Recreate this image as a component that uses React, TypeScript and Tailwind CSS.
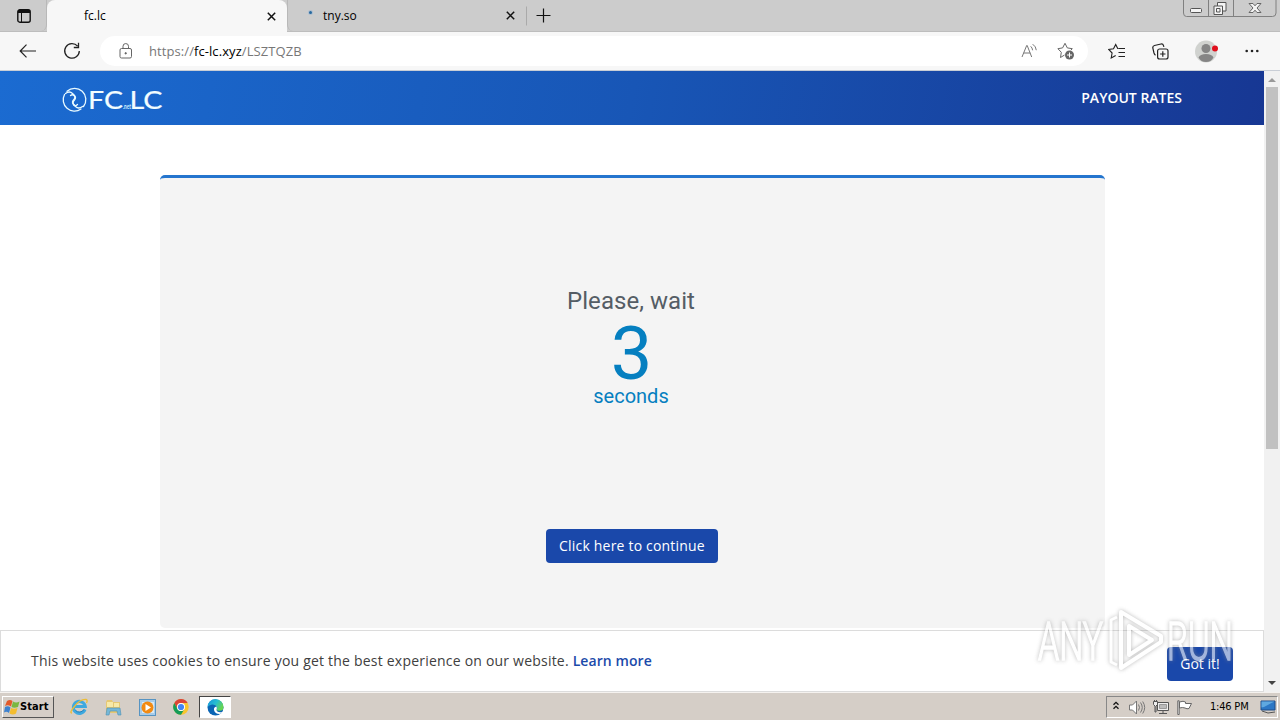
import { useState } from "react";

const uiFont = "font-['Open_Sans',sans-serif]";

function CloseIcon({ className }: { className?: string }) {
  return (
    <svg width="9" height="9" viewBox="0 0 9 9" className={className}>
      <path d="M.8.8l7.400 7.400M8.200.8L.8 8.200" stroke="#111" strokeWidth="1.500" />
    </svg>
  );
}

function WindowButtons() {
  return (
    <svg width="94" height="18" viewBox="0 0 94 18" fill="none" stroke="#808080" className="ml-auto mr-[3px] shrink-0">
      <path d="M.5 0v13q0 3.500 3 3.500h86q3.500 0 3.500-3.500V0M25.500 0v16M50.500 0v16" />
      <rect x="7.500" y="8.500" width="11" height="4" rx="1" fill="#f4f4f4" stroke="#555" />
      <path d="M34.500 2.500h8.500v8.500h-3.500v3.500h-8.500V6h3.500z" fill="#f4f4f4" stroke="#555" />
      <path d="M34.500 6h5v5M33.500 8.500h3.500v3.500h-3.500z" stroke="#555" />
      <path d="M66 3.500h4l2 2.300 2-2.300h4l-4 4.500 4 4.500h-4l-2-2.300-2 2.300h-4L70 8z" fill="#f4f4f4" stroke="#666" />
    </svg>
  );
}

function TabBar() {
  return (
    <div className="flex h-8 bg-[#cccccc] border-b border-[#bdbdbd]">
      <div className="w-[47px] h-[31px] shrink-0 rounded-br-md border-r border-[#b8b8b8] flex items-start pl-[17px] pt-[9px]">
        <svg width="14" height="14" viewBox="0 0 14 14" fill="none" stroke="#111">
          <rect x=".8" y=".8" width="12.400" height="12.400" rx="2" strokeWidth="1.400" />
          <path d="M1 2.500h12" strokeWidth="3" />
          <path d="M4.500 4v9" />
        </svg>
      </div>
      <div className="w-[240px] h-8 shrink-0 flex items-center rounded-t-lg bg-[#f7f7f7] pl-[37px] pr-[11px]">
        <span className="text-xs leading-4 text-black">fc.lc</span>
        <CloseIcon className="ml-auto" />
      </div>
      <div className="w-[239px] h-[31px] shrink-0 flex items-center rounded-bl-md border-l border-[#b8b8b8] pl-[21px] pr-[11px]">
        <span className="size-[3px] rounded-full bg-[#27699e] ring-1 ring-[#aebfd0] -mt-[7px]" />
        <span className="text-xs leading-4 text-black ml-[11px]">tny.so</span>
        <CloseIcon className="ml-auto" />
      </div>
      <svg width="28" height="31" viewBox="0 0 28 31" stroke="#111" className="shrink-0">
        <path d="M-.5 6.500v19" stroke="#888" strokeWidth="2" />
        <path d="M10.500 15.500h14M17.500 8.500v14" strokeWidth="1.200" />
      </svg>
      <WindowButtons />
    </div>
  );
}

function Toolbar() {
  return (
    <div className="flex h-[39px] items-center bg-[#f7f7f7] border-b border-[#c9ced6]">
      <svg width="18" height="14" viewBox="0 0 18 14" fill="none" stroke="#222" strokeWidth="1.200" className="ml-[19px] shrink-0">
        <path d="M7.500.7L1.200 7l6.300 6.300M1.400 7H17" />
      </svg>
      <svg width="18" height="18" viewBox="0 0 18 18" fill="none" stroke="#222" strokeWidth="1.300" className="ml-[26px] shrink-0">
        <path d="M14.600 4.200A7.300 7.300 0 1 0 16.300 9M15.500.8v4.700h-4.700" />
      </svg>
      <div className="ml-[19px] w-[988px] h-[30px] shrink-0 flex items-center rounded-full bg-white pl-[19px] pr-[13px]">
        <svg width="14" height="16" viewBox="0 0 14 16" fill="none" stroke="#666">
          <rect x="1" y="5.500" width="11.500" height="9.500" rx="1.500" />
          <path d="M4 5.500V3.300a2.750 2.750 0 0 1 5.500 0v2.200" />
          <circle cx="6.700" cy="10.300" r=".7" fill="#555" />
        </svg>
        <span className="ml-[16px] text-[13px] leading-5 tracking-[0.08px] text-[#777]">
          https://<span className="text-black">fc-lc.xyz</span>/LSZTQZB
        </span>
        <svg width="17" height="16" viewBox="0 0 17 16" fill="none" stroke="#777" className="ml-auto">
          <path d="M1 14L5.700 2.500h.5L10.700 14M2.700 10h6.500M9.700 3.300q1.700 1.500 1.900 4M11.700 1.200q3.300 2.300 3.600 6" />
        </svg>
        <svg width="18" height="18" viewBox="0 0 18 18" fill="none" stroke="#666" className="ml-[19px]">
          <path d="M7.500 13l-4 2.500.8-5.200L.9 6.700l4.700-.8L8 1.300l2.300 4.600 5 .8-1.500 1.500" />
          <circle cx="12.500" cy="13" r="4.500" fill="#666" stroke="none" />
          <path d="M12.500 10.500v5M10 13h5" stroke="#fff" />
        </svg>
      </div>
      <svg width="18" height="17" viewBox="0 0 18 17" fill="none" stroke="#222" strokeWidth="1.100" className="ml-[20px] shrink-0">
        <path d="M10.500 5.500H17M10.500 9.500H17M10.500 13.500H17M10.300 5.500h-.6L7.700 1.400 5.500 5.800l-4.800.7 3.400 3.500-.9 5 4.500-2.500" />
      </svg>
      <svg width="17" height="17" viewBox="0 0 17 17" fill="none" stroke="#222" strokeWidth="1.200" className="ml-[26px] shrink-0">
        <rect x="5.600" y="6" width="10.400" height="10" rx="2" />
        <path d="M10.800 8.300v5.400M8.100 11h5.400M3.500 12.200Q2.500 11.500 2 10L.8 5Q.5 3 2.500 2.500L9 1q2-.3 2.500 1.600l.4 1.300" />
      </svg>
      <svg width="24" height="23" viewBox="0 0 24 23" className="ml-[25px] shrink-0">
        <circle cx="12" cy="11.500" r="11" fill="#d0d2cf" />
        <circle cx="12" cy="8.500" r="4.500" fill="#858585" />
        <path d="M4.500 17.500Q6 14 12 14t7.500 3.500Q17 22 12 22t-7.500-4.500" fill="#858585" />
        <circle cx="21" cy="8.500" r="3" fill="#e0101d" />
      </svg>
      <svg width="14" height="4" viewBox="0 0 14 4" fill="#222" className="ml-[27px] shrink-0">
        <circle cx="1.700" cy="2" r="1.300" />
        <circle cx="7" cy="2" r="1.300" />
        <circle cx="12.300" cy="2" r="1.300" />
      </svg>
    </div>
  );
}

function Logo() {
  return (
    <svg width="104" height="28" viewBox="0 0 104 28" fill="none" stroke="#e9faff" className="overflow-visible">
      <g strokeWidth="1.300" strokeLinecap="round">
        <path d="M6 5.200A11.300 11.300 0 0 1 22.500 20.500M20 23A11.300 11.300 0 0 1 3.500 8.500" />
        <path d="M4.500 7.500Q8.500 4.500 11.500 7.500l2 2q2 2.500 0 4.500-2.500 2.500-.5 5" />
        <path d="M21.500 20.500q-4 3-7 0l-2-2q-2-2.500 0-4.500 2.500-2.500.5-4.500-1.500-1.500-3.500 0" />
        <path d="M13 19q1.500 1.500 3.500-.5" />
      </g>
      <g fill="#f2fdff" fontSize="25" className="font-[Lato,sans-serif]" stroke="#f2fdff" strokeWidth=".2">
        <text x="27" y="22.500" textLength="35" lengthAdjust="spacingAndGlyphs">FC</text>
        <text x="68.500" y="22.500" textLength="33" lengthAdjust="spacingAndGlyphs">LC</text>
      </g>
      <text x="62" y="22.500" fontSize="7" fontWeight="700" fill="#cdf0ff" stroke="none" textLength="8" lengthAdjust="spacingAndGlyphs" className="font-[Lato,sans-serif]">.net</text>
    </svg>
  );
}

function CookieBar({ onClose }: { onClose: () => void }) {
  return (
    <div className="mt-[2px] h-[62px] flex items-center border border-[#dcdcdc] bg-white pl-[30px] pr-[30px] text-sm text-[#404040]">
      <p>
        <span className="tracking-[0.21px]">This website uses cookies to ensure you get the best experience on our website. </span>
        <a href="#" className="font-semibold text-[#1b4aaa] tracking-[0.08px]">Learn more</a>
      </p>
      <button
        type="button"
        onClick={onClose}
        className="ml-auto mt-[6px] h-[34px] w-[66px] rounded bg-[#1a48aa] text-white whitespace-nowrap"
      >
        Got it!
      </button>
    </div>
  );
}

function Page() {
  const [showCookies, setShowCookies] = useState(true);

  return (
    <div className="w-[1264px] shrink-0 bg-white">
      <header className="h-[54px] flex items-center justify-between bg-[linear-gradient(100deg,#1b6bd1,#1856b6_50%,#173793)] pl-[61px] pr-[82px]">
        <div className="mt-[3px]">
          <Logo />
        </div>
        <a href="#" className="text-sm font-semibold text-white">PAYOUT RATES</a>
      </header>
      <main className="mt-[50px] ml-[160px] w-[945px] h-[453px] rounded-[5px] border-t-[3px] border-[#2475ce] bg-[#f4f4f4] flex flex-col items-center font-[Roboto,sans-serif] text-[#057fc0]">
        <div className="mt-[105px] -ml-[3px] text-2xl leading-9 tracking-[0.05px] text-[#555d65]">Please, wait</div>
        <div className="-ml-[2px] text-[74px] leading-[70px]">3</div>
        <div className="-ml-[3px] -mt-[5px] text-xl leading-6">seconds</div>
        <button
          type="button"
          className="mt-[121px] -ml-px h-[34px] w-[172px] rounded bg-[#1a48aa] font-['Open_Sans',sans-serif] text-sm tracking-[0.19px] text-white whitespace-nowrap"
        >
          Click here to continue
        </button>
      </main>
      {showCookies && <CookieBar onClose={() => setShowCookies(false)} />}
    </div>
  );
}

function Scrollbar() {
  return (
    <div className="w-4 flex flex-col items-center bg-[#f1f1f1]">
      <svg width="8" height="16" viewBox="0 0 8 16" className="shrink-0">
        <path d="M0 11l4-4 4 4z" fill="#999" />
      </svg>
      <div className="h-[362px] w-[12px] bg-[#c1c1c1]" />
      <svg width="8" height="16" viewBox="0 0 8 16" className="mt-auto shrink-0">
        <path d="M0 5l4 4 4-4z" fill="#444" />
      </svg>
    </div>
  );
}

function Watermark() {
  return (
    <svg
      width="210"
      height="76"
      viewBox="0 0 210 76"
      className="absolute left-[1030px] top-[602px] pointer-events-none opacity-60 drop-shadow-[0_0_2px_#8c8c8c]"
    >
      <g fill="#fff" stroke="#fff" strokeWidth="1.600" fontSize="53" className="font-[Roboto,sans-serif] font-light">
        <text x="8" y="58" textLength="65" lengthAdjust="spacingAndGlyphs">ANY</text>
        <text x="137" y="58" textLength="66" lengthAdjust="spacingAndGlyphs">RUN</text>
      </g>
      <g fill="none" stroke="#fff" strokeWidth="4" strokeLinejoin="round">
        <path d="M87 15l-6 3v42l6 3" strokeWidth="3" />
        <path d="M91 10l40 24v6L91 66V10zM99 24v29l23-15z" />
      </g>
    </svg>
  );
}

function Taskbar() {
  return (
    <div className="h-7 flex items-center bg-[#d5cec7] border-t border-[#f5f2ef] pt-px pl-[2px] pr-[2px]">
      <button
        type="button"
        className="h-[22px] w-[52px] flex items-center border border-t-white border-l-white border-r-[#555] border-b-[#555] text-[11px] font-bold text-black font-['DejaVu_Sans_Condensed','DejaVu_Sans',sans-serif] tracking-[0.1px]"
      >
        <svg width="16" height="16" viewBox="0 0 16 16" className="ml-px shrink-0">
          <path d="M3 2q3-2 5.500 0L7 7.500q-3-2-6-.5z" fill="#e35a2b" />
          <path d="M9 2.500q3 2 6.500 0L14 8q-4 1.500-6.500 0z" fill="#7ab741" />
          <path d="M1 8q3-1.500 5.500.5L5 14q-2.500-2-5-.5z" fill="#3e82cf" />
          <path d="M7 9q3 1.500 6.500 0L12 14.500q-3 2-6.500 0z" fill="#f4bd2e" />
        </svg>
        <span>Start</span>
      </button>
      <svg width="18" height="18" viewBox="0 0 18 18" fill="none" className="ml-[16px]">
        <path d="M15 11.500a6 6 0 1 1 .3-3H5" stroke="#3ea9df" strokeWidth="3" />
        <path d="M14 11.500a5.500 5.500 0 0 1-8.500 1" stroke="#237eb9" />
        <path d="M2 15Q-1 15 4 9q6-8 12-7.500 2 .5.500 3.500" stroke="#edbd35" strokeWidth="1.300" />
      </svg>
      <svg width="17" height="17" viewBox="0 0 17 17" className="ml-[17px]">
        <path d="M1 3l1-2h5l1 2h7v11H1z" fill="#e6c873" />
        <path d="M2 3h6v5H2zM9 4h5v4H9z" fill="#f7e9a8" />
        <path d="M2 9h13l1 7h-3l-1-4H5l-1 4H1z" fill="#75b7d8" stroke="#4b91b5" strokeWidth=".6" />
      </svg>
      <svg width="17" height="17" viewBox="0 0 17 17" className="ml-[17px]">
        <rect x=".5" y=".5" width="16" height="16" fill="#a8cce9" stroke="#5794c2" />
        <rect x="3" y="3" width="12" height="11" fill="#d9eaf5" />
        <circle cx="8.500" cy="8.500" r="6" fill="#f28a13" />
        <path d="M6.500 5v7l5.500-3.500z" fill="#fff" />
      </svg>
      <svg width="16" height="16" viewBox="0 0 16 16" className="ml-[17px]">
        <circle cx="8" cy="8" r="7.700" fill="#f9c52d" />
        <path d="M1.300 4A7.700 7.700 0 0 1 14.700 4H8a4 4 0 0 0-3.500 6z" fill="#db4437" />
        <path d="M1.300 4A7.700 7.700 0 0 0 8 15.700L11.500 10A4 4 0 0 1 4.500 10z" fill="#159c58" />
        <circle cx="8" cy="8" r="4" fill="#fff" />
        <circle cx="8" cy="8" r="3.100" fill="#4285f4" />
      </svg>
      <div className="ml-[10px] w-[32px] h-[22px] flex items-center justify-center bg-white border border-t-[#444] border-l-[#444] border-r-white border-b-white">
        <svg width="17" height="17" viewBox="0 0 17 17">
          <defs>
            <linearGradient id="edge" x1="0" y1="0" x2="1" y2=".5">
              <stop stopColor="#1792dc" />
              <stop offset=".55" stopColor="#27bed1" />
              <stop offset="1" stopColor="#67d551" />
            </linearGradient>
          </defs>
          <circle cx="8.500" cy="8.500" r="8" fill="#0b65b4" />
          <path d="M.5 8a8 8 0 0 1 16 .2q0 3.500-4 3.500-3 0-3-1.200 1-1 .5-2.500Q8.500 5 5 5.500 1.800 6 .5 8z" fill="url(#edge)" />
          <path d="M9.500 7.500Q6.500 8 7 11q1 4 5.500 4 2 0 3-2-6 1-6-2.500.8-1 0-3z" fill="#fff" />
        </svg>
      </div>
      <div className="ml-auto w-[172px] h-[22px] shrink-0 flex items-center border border-t-[#888] border-l-[#888] border-r-white border-b-white pl-[6px]">
        <svg width="6" height="9" viewBox="0 0 6 9" fill="none" stroke="#111" strokeWidth="1.300" className="-mt-[3px]">
          <path d="M.5 3.800L3 1.300l2.500 2.500M.5 7.800L3 5.300l2.500 2.500" />
        </svg>
        <svg width="17" height="15" viewBox="0 0 17 15" fill="#fff" stroke="#777" className="ml-[10px]">
          <path d="M.5 5h3l4-4v13l-4-4h-3z" />
          <path d="M9.500 4.500q2 3 0 6M11.500 2.500q3.500 5 0 10M13.700 1.500q4 6 0 12" fill="none" />
        </svg>
        <svg width="17" height="16" viewBox="0 0 17 16" fill="#eee" stroke="#555" className="ml-[7px]">
          <path d="M4.500 3.500h11v8h-11zM6 14.500h8M10 12v2" />
          <path d="M6.500 5.500h7v4h-7z" fill="#bbb" stroke="#999" />
          <path d="M.5 2.500h4v3l-1.500 1.500v6H2V7L.5 5.500zM1.500 1v1M3.500 1v1" />
        </svg>
        <svg width="16" height="15" viewBox="0 0 16 15" fill="#fff" stroke="#666" className="ml-[7px]">
          <path d="M.8 14.500V.8h1.400v13.700z" />
          <path d="M2.500 2q4-1.500 6 0v1.500h6L12 8.500q-2 .8-4-.5-2.500-1-5.500 0z" />
        </svg>
        <span className="ml-[17px] text-[11px] leading-4 text-black whitespace-nowrap font-['DejaVu_Sans_Condensed','DejaVu_Sans',sans-serif] tracking-[-0.2px]">1:46 PM</span>
        <svg width="16" height="14" viewBox="0 0 16 14" className="ml-auto mr-px">
          <path d="M1 1h14v9H1z" fill="#2c77c5" stroke="#214d86" />
          <path d="M1.500 1.500h13L4 7l-2.500.5z" fill="#5fa8e0" />
          <path d="M2 11l6 2 7-1" stroke="#555" fill="none" />
        </svg>
      </div>
    </div>
  );
}

export default function App() {
  return (
    <div className={`relative w-[1280px] h-[720px] overflow-hidden flex flex-col ${uiFont}`}>
      <TabBar />
      <Toolbar />
      <div className="flex h-[621px] shrink-0">
        <Page />
        <Scrollbar />
      </div>
      <Taskbar />
      <Watermark />
    </div>
  );
}
